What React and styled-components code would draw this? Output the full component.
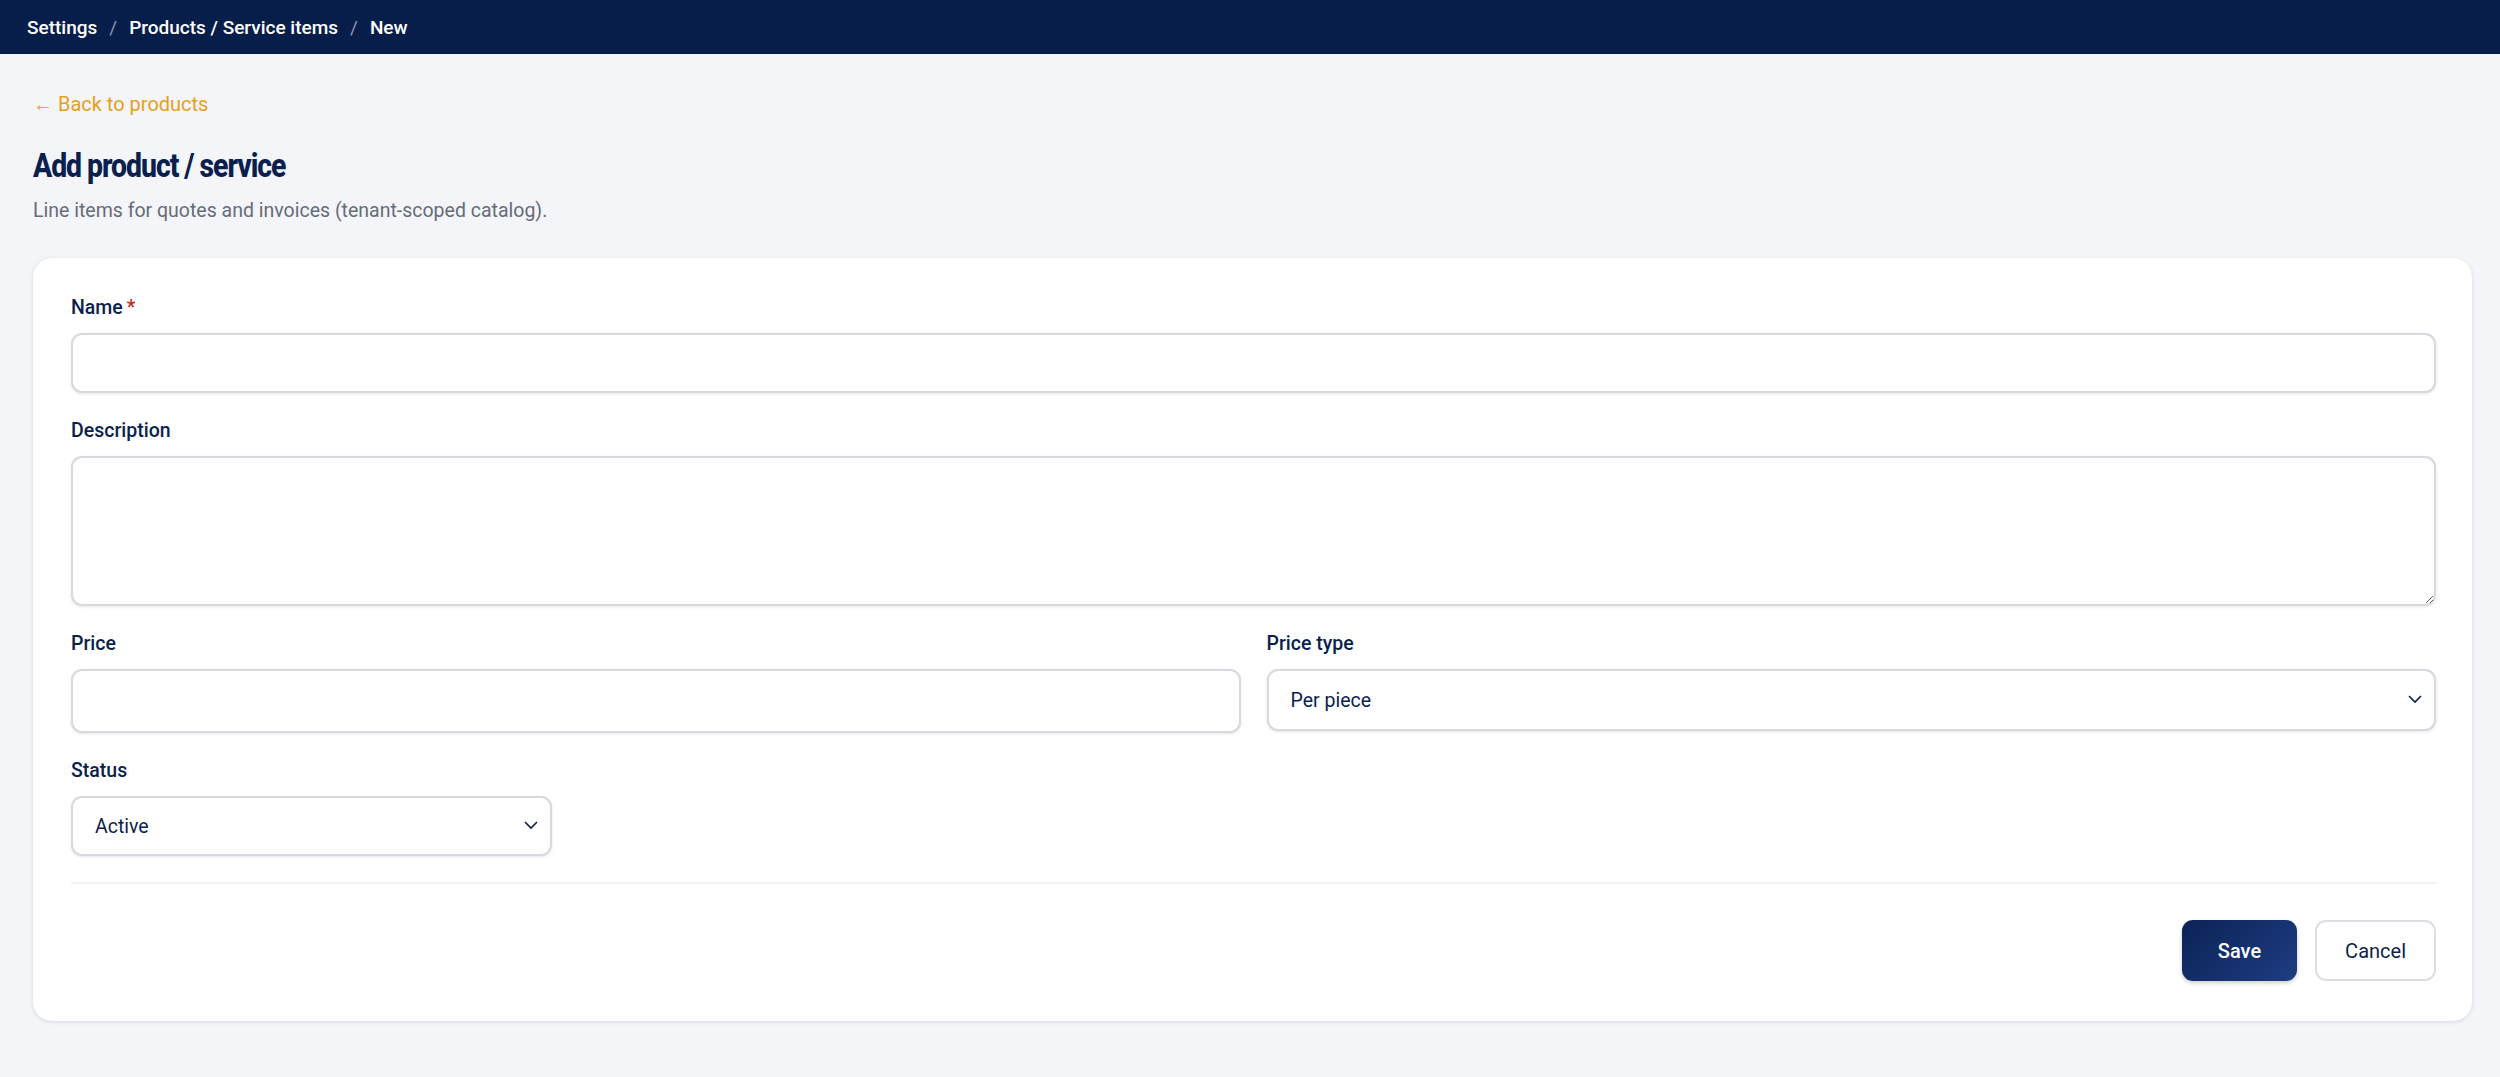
import React from "react";
import styled, { createGlobalStyle } from "styled-components";

const Global = createGlobalStyle`
  html, body { margin: 0; padding: 0; background: #f4f5f9; }
  body { font-family: Roboto, "Noto Sans", sans-serif; color: #0b1f4d; }
  * { box-sizing: border-box; }
`;

const TopBar = styled.header`
  height: 54px; background: #071e4b; display: flex; align-items: center;
  padding: 0 27px; gap: 12px; font-size: 19px; font-weight: 500; color: #fff;
`;
const Sep = styled.span` color: #8a96b3; font-weight: 400; `;
const Main = styled.main` padding: 38px 28px 30px 33px; `;
const Back = styled.a`
  color: #e89f1a; font-size: 20px; text-decoration: none; display: block; margin-bottom: 30px;
`;
const Title = styled.h1`
  margin: 0 0 14px; font-size: 33px; font-weight: 800; letter-spacing: -1.2px; color: #0b1f4d;
  transform: scaleX(0.86); transform-origin: left;
`;
const Sub = styled.p` margin: 0 0 36px; color: #666c78; font-size: 19.5px; `;
const Card = styled.section`
  background: #fff; border-radius: 19px; box-shadow: 0 1px 4px rgba(0,0,0,0.12);
  padding: 38px 36px 40px 38px;
`;
const Field = styled.div` display: flex; flex-direction: column; margin-bottom: 26px; width: ${p => p.w || "auto"}; flex: ${p => p.grow ? 1 : "none"}; `;
const Label = styled.label` font-size: 19.5px; font-weight: 500; color: #0b1f4d; margin-bottom: 14px; `;
const Req = styled.span` color: #c62828; margin-left: 4px; `;
const boxCss = `
  border: 2px solid #d7d9de; border-radius: 11px; background: #fff;
  box-shadow: 0 1px 3px rgba(0,0,0,0.1); font-family: inherit; font-size: 19.5px;
  color: #0b1f4d; padding: 0 22px; outline: none; width: 100%;
`;
const Input = styled.input` ${boxCss} height: ${p => p.h || 60}px; `;
const Area = styled.textarea` ${boxCss} height: 150px; resize: vertical; padding: 14px 22px; `;
const SelWrap = styled.div` position: relative; `;
const Select = styled.select` ${boxCss} height: ${p => p.h || 62}px; appearance: none; `;
const Chev = styled.svg` position: absolute; right: 14px; top: 50%; margin-top: -6px; pointer-events: none; `;
const Row = styled.div` display: flex; gap: 26px; `;
const Divider = styled.hr` border: 0; border-top: 2px solid #f1f2f5; margin: 8px 0 36px; `;
const Actions = styled.div` display: flex; justify-content: flex-end; gap: 18px; `;
const Btn = styled.button`
  height: 61px; padding: 0 ${p => p.primary ? 36 : 28}px; border-radius: 11px; font-family: inherit;
  font-size: 20px; font-weight: ${p => p.primary ? 500 : 400};
  color: ${p => p.primary ? "#fff" : "#0b1f4d"};
  background: ${p => p.primary ? "linear-gradient(135deg,#0b2356,#1e3c82)" : "#fff"};
  border: ${p => p.primary ? "none" : "2px solid #dcdee3"};
  box-shadow: ${p => p.primary ? "0 2px 4px rgba(0,0,0,0.2)" : "none"};
`;

const Sel = ({ value, h }) => (
  <SelWrap>
    <Select h={h} defaultValue={value}><option>{value}</option></Select>
    <Chev width="14" height="10" viewBox="0 0 14 10"><path d="M1 2l6 6 6-6" fill="none" stroke="#0b1f4d" strokeWidth="1.6" /></Chev>
  </SelWrap>
);

export default function App() {
  return (
    <>
      <Global />
      <TopBar>
        <span>Settings</span><Sep>/</Sep><span>Products / Service items</span><Sep>/</Sep><span>New</span>
      </TopBar>
      <Main>
        <Back href="#">← Back to products</Back>
        <Title>Add product / service</Title>
        <Sub>Line items for quotes and invoices (tenant-scoped catalog).</Sub>
        <Card>
          <Field><Label>Name<Req>*</Req></Label><Input /></Field>
          <Field><Label>Description</Label><Area /></Field>
          <Row>
            <Field grow><Label>Price</Label><Input h={64} /></Field>
            <Field grow><Label>Price type</Label><Sel value="Per piece" /></Field>
          </Row>
          <Field w="481px"><Label>Status</Label><Sel value="Active" h={60} /></Field>
          <Divider />
          <Actions>
            <Btn primary>Save</Btn>
            <Btn>Cancel</Btn>
          </Actions>
        </Card>
      </Main>
    </>
  );
}
